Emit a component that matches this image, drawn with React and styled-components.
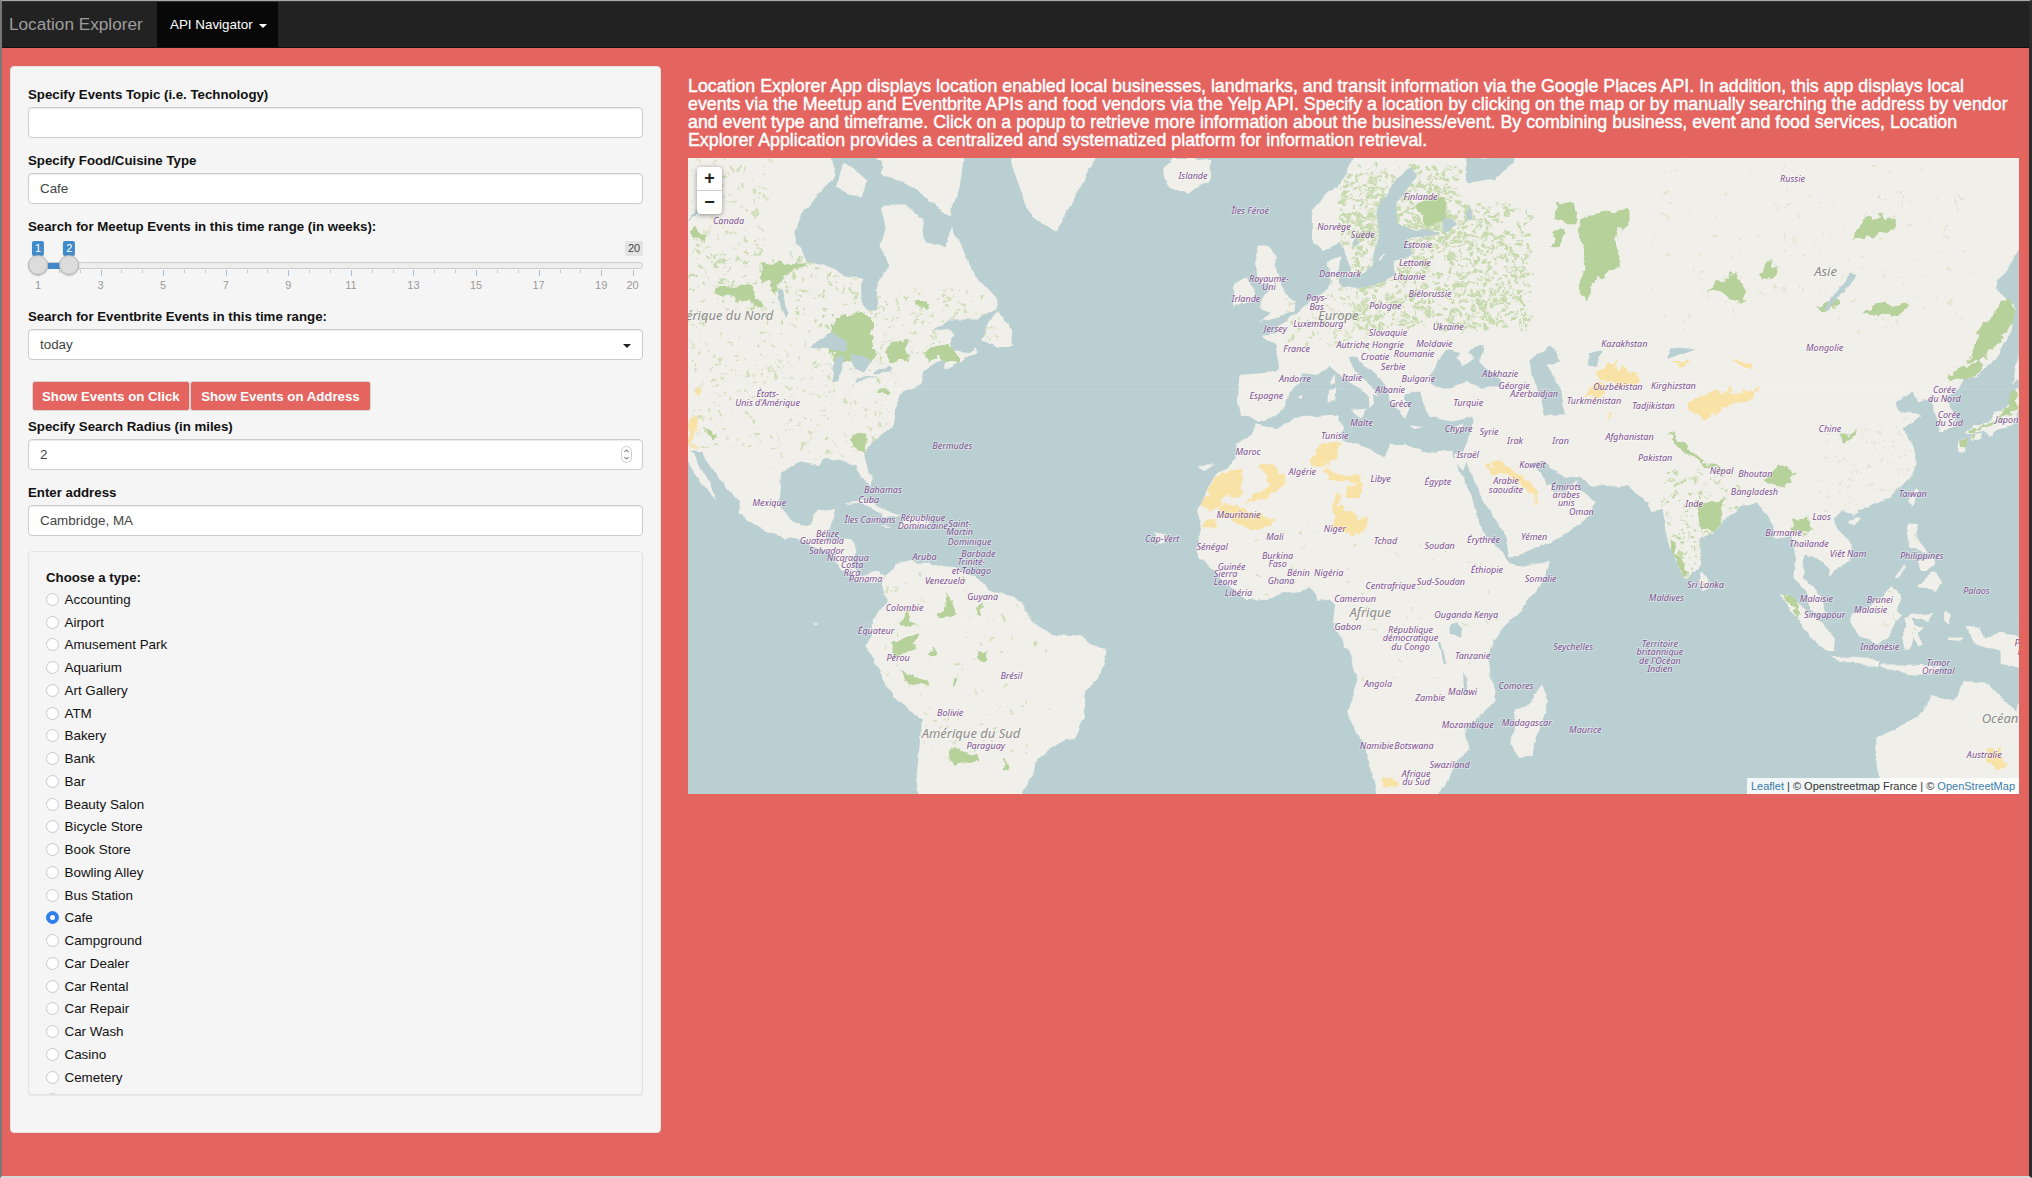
import React from 'react'
import styled, { createGlobalStyle } from 'styled-components'

const GlobalStyle = createGlobalStyle`
  html, body {
    margin: 0;
    padding: 0;
    background: #8a8a8a;
  }
  * { box-sizing: border-box; }
`

const MAP_X = 688
const MAP_Y = 158
const MAP_W = 1331
const MAP_H = 636

// web mercator at zoom 3, tile edge 233px
const project = ([lon, lat]) => {
  const merc = Math.log(Math.tan(Math.PI / 4 + (lat * Math.PI) / 360))
  return [1286 + 5.178 * lon - MAP_X, 622 - 296.7 * merc - MAP_Y]
}
const toPoints = (list) => list.map(project).map((p) => p.map((n) => n.toFixed(1)).join(',')).join(' ')

// the reference crops were read at 2.306x wide, 3x high
const fromCrop = (ox, oy) => ([zx, zy]) => [ox + zx / 2.306 - MAP_X, oy + zy / 3 - MAP_Y]
const cropA = fromCrop(680, 60)
const cropB = fromCrop(1352, 60)
const cropC = fromCrop(680, 360)
const cropD = fromCrop(1352, 360)
const shape = (crop, list) => list.map(crop).map((p) => p.map((n) => n.toFixed(1)).join(',')).join(' ')

const LAND = [
  [[-118,69],[-96,69],[-94,67],[-88,66.5],[-87,65],[-90,63.5],[-93,62],[-94.5,60],[-94.5,58.7],[-92.5,57],[-88,56.5],[-85,55.3],[-82.3,55.1],[-82.2,53],[-80.5,51.4],[-79,51.5],[-79,54],[-76.8,56.5],[-78.5,58.7],[-77.5,60.5],[-78,62.4],[-73.5,62.4],[-70,61],[-69.5,59],[-66,58.5],[-64.5,60.3],[-62,57.5],[-60,55.5],[-56,53],[-55.8,51.7],[-60,50.2],[-65,50.2],[-68,48.8],[-65,49.2],[-64.3,48.5],[-65,47.5],[-64,46.2],[-61,46],[-60,46.8],[-60,46],[-63.5,44.6],[-66,43.6],[-66,45],[-67,44.8],[-70,43.7],[-70.5,41.7],[-74,40.6],[-75.5,38],[-76,35.2],[-78,33.9],[-81,32],[-81.5,30.5],[-80,26.8],[-80.5,25.2],[-82,26.5],[-83,29],[-85,29.7],[-89,30.2],[-90,29],[-94,29.6],[-97.3,27.5],[-97.8,22.5],[-95.5,19],[-94,18.2],[-91.5,18.6],[-90.5,21],[-87,21.5],[-88,18],[-88.8,15.9],[-84,15.8],[-83.3,14.9],[-83.7,11],[-82,9],[-79.5,9.6],[-77.4,8.7],[-78,7.5],[-80,7.4],[-83,8.2],[-85.7,10],[-87.5,13],[-92,14.5],[-94.5,16.2],[-97,15.9],[-102,18],[-105.5,20.5],[-105.5,22.5],[-109,26],[-113,31.2],[-114.8,31.5],[-112,27],[-110,23],[-112,25],[-115,29],[-117,32.5],[-121,34.5],[-124,40],[-125,49],[-130,54],[-140,60],[-160,60],[-165,70]],
  [[-77.4,8.7],[-75.5,11],[-72,12],[-71,11],[-68,11],[-64,10.5],[-60,8.5],[-57,6],[-52,4.8],[-50,1.5],[-48,-0.7],[-44.3,-2.5],[-40,-2.8],[-35.2,-5.5],[-34.8,-8],[-37,-11],[-39,-13.5],[-39,-18],[-41,-22],[-44,-23],[-48,-25.5],[-48.6,-28],[-52,-32.5],[-56,-35],[-70,-35],[-71.5,-30],[-70.3,-18.5],[-76,-14],[-79,-8],[-81.2,-5],[-80,-2.5],[-80,0.5],[-78,2.5],[-77.3,4],[-78,7]],
  [[-78,65],[-74,64.5],[-65,61.5],[-63,64],[-62,67],[-70,72],[-85,72],[-85,68],[-78,66]],
  [[-87,64],[-82,63],[-81,64.5],[-85,66]],
  [[-59,47.7],[-55.5,46.8],[-53,46.8],[-53,48.7],[-55.5,51.5],[-57.5,50]],
  [[-85,22],[-82,23.1],[-77,21],[-74.2,20.2],[-77.5,19.9],[-78,20.7],[-82,22.3]],
  [[-74.5,18.5],[-73,20],[-70,19.8],[-68.4,18.6],[-71,18],[-74.5,18]],
  [[-78.3,18.4],[-76.3,18.2],[-76.8,17.8]],
  [[-67.2,18.5],[-65.7,18.4],[-66.5,17.9]],
  [[-91.5,-0.4],[-90.6,-0.2],[-91,-1]],
  [[-44,60],[-42,62],[-38,65.5],[-30,69],[-20,72],[-60,76],[-54,70],[-53,66],[-50,62],[-48,61]],
  [[-24,65.5],[-22.5,64],[-19,63.4],[-14.5,64.5],[-14.5,66],[-17,66.3],[-22,66.4]],
  [[-5.5,50],[1.4,51.2],[1.7,52.7],[0,53.5],[-2,56],[-2,57.7],[-3.5,58.6],[-5,58.6],[-6.3,56.6],[-4.8,54.8],[-3,54],[-4.5,53.2],[-5,51.7],[-3,51.3]],
  [[-10,52],[-6.3,52.2],[-6,54],[-7.3,55.3],[-10,54.3]],
  [[12.5,38],[15.6,38.2],[15,36.7]],
  [[8.2,39],[8.3,41],[9.7,41],[9.6,39.2]],
  [[8.6,41.7],[9.4,43],[9.5,41.5]],
  [[23.6,35.5],[26.3,35.2],[24.8,34.9]],
  [[32.3,35],[34.5,35.6],[33.8,34.6],[32.8,34.6]],
  [[2.4,39.6],[3.4,39.9],[3.2,39.3]],
  [[18.2,57],[19,57.9],[18.8,57]],
  [[11,55.7],[12.6,56],[12.2,55]],
  [[-17,28.5],[-13.5,29],[-15.5,27.8]],
  [[-25.3,17],[-22.7,16.7],[-23.6,14.9],[-24.8,15]],
  [[-9,43],[-9.3,38.7],[-8.8,37],[-6.3,36.6],[-5.4,36],[-2,36.8],[0,38.7],[0.5,40.5],[3.2,42],[3.2,43.2],[6,43],[8.5,44.3],[10.5,43],[12.5,41.5],[15.8,40],[16,38],[17,39],[16.8,40.4],[18.4,40],[16,41.7],[13.5,43.5],[12.3,45.3],[13.7,45.6],[15,44.5],[18,42.6],[19.4,41],[20,39.5],[22,37.2],[23,36.5],[23.8,38],[23,40],[26,40.5],[26.2,39.5],[27,38],[27.5,36.8],[30.5,36.3],[33,36],[36,36.7],[35.9,35],[35,33],[34.3,31.3],[32.6,30.5],[32.8,29.5],[34.2,27.8],[34.9,29.5],[36.5,26],[39,21.5],[42.5,16.5],[43.3,12.8],[45,12.8],[48,14],[52,15.7],[55,17],[58.5,20.4],[59.8,22.5],[58.5,23.7],[56.4,24.9],[56.3,26.2],[54,24.2],[51.6,24.3],[51.3,26],[50.3,25.5],[50,26.5],[48,29.5],[50,30.1],[51.5,27.9],[54,26.6],[56.8,27],[59,25.4],[61.6,25.2],[66.5,25.4],[67.5,24],[70,22.5],[70.5,20.8],[72.3,21],[72.8,19],[73.5,15.5],[75,12.5],[76.5,9],[77.5,8.1],[78.2,9],[79.8,10.3],[80.3,13.5],[80,15.5],[82.3,16.7],[85,19.5],[87,21.4],[89,21.9],[91,22.4],[92.2,21],[94.3,18],[94.4,16],[95.5,15.8],[97.6,16.5],[98.5,12],[98.2,8.5],[100.2,6.5],[101,3],[103.5,1.3],[104.2,1.5],[103.4,4.5],[102,6.5],[100,8.5],[100,13.2],[101,12.7],[102.8,12],[105,10],[104.8,8.6],[106.7,10.4],[109.2,11.7],[109,15],[106,18.5],[105.8,19.5],[107.5,21.3],[110,20.3],[110.5,21.2],[114,22.3],[117,23.4],[120,26.5],[121.9,29.5],[121,31.7],[119.3,35],[122.5,37],[119,37.5],[117.7,39],[121,40.8],[122,39],[125,39.7],[125,37.5],[126.5,34.5],[129.3,35.2],[129.4,37],[127.5,39.5],[129.7,41],[130.7,42.3],[133,42.8],[136,44.5],[140,48.5],[141,52],[137,54],[143,59.5],[160,60],[180,65],[180,75],[100,78],[70,73],[68,68.5],[60,69],[44,68],[44,66],[40,64.7],[35,64.3],[34.8,66.5],[40,66.3],[41,67],[38,68.5],[33,69.5],[25,71],[15,68.5],[12,65],[5,62],[5,59],[7,58],[10.5,59],[11.3,58],[12.8,55.5],[14.3,55.5],[16.5,56.5],[18,59.5],[17.5,62],[21,64.5],[24,65.7],[25.3,65],[21.3,62.5],[21.5,60.7],[25,60.2],[30,60],[28,59.5],[23.5,59.2],[24.3,57.5],[21,57],[21,55.3],[18.5,54.7],[14,54],[11,54],[10,54.7],[10.5,57.5],[8.3,57],[8.5,54],[4.5,52.5],[1.5,50.8],[-1.5,49.6],[-1.5,48.6],[-4.7,48.4],[-2,47],[-1.3,44],[-2,43.4]],
  [[-5.9,35.8],[-2,35],[3,36.9],[10,37.3],[11,35],[10.2,34],[11,33],[15.5,32],[19,30.4],[20.2,32.5],[23,32.5],[25,31.6],[29,31],[32,31.2],[32.6,30],[33.7,27.5],[35.5,24],[37,21],[37.3,18.5],[39.5,15.5],[43,12],[43.3,11.5],[45,10.5],[51.2,11.9],[49,7],[46,3],[42,-1],[40,-3.5],[39,-6.5],[39.5,-10],[40.7,-15],[37,-18],[34.8,-20],[35.5,-24],[32.8,-26],[31,-30],[28,-33],[20,-35],[18.3,-34],[17,-29],[14.5,-22.5],[11.8,-17],[13.8,-11],[12.3,-6],[9,-1],[9.5,3.5],[8.5,4.5],[6,4.3],[4.5,6.3],[1,6],[-2,4.8],[-7.5,4.4],[-11,6.7],[-13.5,9.5],[-16.7,12.4],[-17.4,14.7],[-16.3,19],[-17,21],[-14.5,26],[-13,27.8],[-9.8,30],[-9.5,32.5],[-6.8,34]],
  [[49.3,-12],[50.4,-15.5],[47.5,-24.7],[45,-25.5],[43.5,-23],[44.4,-19.5],[44,-17],[47,-15.5]],
  [[114,-22],[114,-26],[115,-34],[118,-35],[124,-33],[130,-31.5],[138,-35],[150,-37],[153.5,-28],[146,-19],[142.5,-11],[141,-17],[136,-12],[131,-11.3],[129,-15],[125,-14],[122,-18],[118,-20]],
  [[95.3,5.5],[97.5,5.2],[100.5,2.2],[103.5,0],[106,-3],[105.8,-5.8],[104.5,-5.8],[101,-2.5],[98.5,1]],
  [[105.2,-6.8],[108.5,-6.6],[112.5,-6.9],[114.5,-7.8],[114.4,-8.7],[110,-8],[106.5,-7.4]],
  [[115,-8.2],[119,-8.2],[123,-8.3],[125,-8.5],[127,-8.5],[124,-10.2],[120,-10],[117,-9],[115,-8.8]],
  [[109,1.5],[111,1.8],[113,3.2],[115.5,5.5],[117,7],[119,5],[117.7,3],[119,1],[117.5,0],[116,-3.5],[114.5,-4],[110.5,-3],[109,0]],
  [[119.5,0.5],[121,1.3],[125,1.5],[124,0.4],[120.8,0.4],[121.5,-1],[123.3,-1],[122,-2],[123,-4.5],[122,-5],[121,-3],[120.4,-5.5],[119.5,-5.5],[119,-3],[119.8,-1]],
  [[120.5,18.5],[122.2,18.4],[122,16],[124,13],[122,13.8],[120.5,14],[120,16]],
  [[122,7],[123.5,8.6],[125.5,9.7],[126.5,7.5],[125.5,5.8],[124,6.5]],
  [[122,11.5],[125,12.3],[125.7,11],[124,9.8],[122.5,9.8]],
  [[117.2,8.4],[119.5,11.3],[119.6,10.3],[118,8.4]],
  [[120.2,23],[121.5,25.2],[122,24.8],[120.9,22]],
  [[108.7,19.2],[110.5,20.1],[111,19.6],[109.6,18.2]],
  [[130,33],[131.7,33.5],[131.3,31.3],[130.3,31.3]],
  [[131,34.3],[133,35.5],[136,36],[137,37.3],[139.5,38.5],[140,40.5],[141.3,41.3],[142,39.5],[141,37],[140.8,35.6],[137,34.6],[135.7,33.5],[135,34.6],[132.5,34.2]],
  [[140,41.7],[141.5,45.4],[145.3,43.5],[143,42],[141,42.5]],
  [[132.5,34],[134.5,34.3],[134,33],[132.5,33]],
  [[131,-1],[134,-0.8],[135,-3.3],[138,-1.6],[141,-2.6],[147,-6],[150,-10.5],[143,-9],[138,-8.3],[138,-5.5],[133,-4],[132.5,-2.8]],
  [[127.5,2],[128.6,1.5],[128.2,-0.8],[127.5,0]],
  [[128,-3],[130.8,-3],[130,-3.6],[128,-3.5]],
  [[79.8,8.5],[80.1,9.8],[81.4,8.5],[81.8,7],[80.6,5.9],[80,6.5]],
]

const LAKES = [
  [[28,41.5],[29,41.2],[31.5,41.2],[35,42],[38,41],[41.5,41.5],[41,43],[37.5,44.7],[38,47],[35,46],[36.5,45.2],[34,44.4],[32.7,45.4],[33.5,46],[31,46.5],[29.5,45.2],[27.8,43.3]],
  [[47,45],[51,47],[53,45],[50.5,44.5],[53,41],[54,37],[50,37],[49,40],[47.5,43]],
  [[58.5,46],[61,46.5],[60,44],[58.3,44]],
  [[73.5,45.2],[79,46.5],[74.5,46.8]],
  [[103.8,51.5],[105,51.6],[110,55.5],[109,55.7]],
  [[30.5,60],[33,60.5],[32,61.2],[30,61.2]],
  [[34.8,61],[36,61.2],[35.5,62.5]],
  [[12.5,58.6],[14,59],[13.5,59.4]],
  [[-92,46.7],[-88,48.8],[-85,47.8],[-84.6,46.5],[-87,46.5]],
  [[-87.8,42],[-86.5,42],[-85,45.8],[-87,45.5]],
  [[-84,46],[-80,45],[-81.7,43.2],[-83.5,43.8]],
  [[-83.2,41.7],[-79,42.8],[-79,43],[-83,42.2]],
  [[-79.6,43.3],[-76.3,43.5],[-76.5,44.1],[-79,43.9]],
  [[-98,53.8],[-97,50.5],[-96.3,51],[-97,54]],
  [[-116,61],[-109,62.8],[-112,62.8]],
  [[33,0],[34,-1],[33.8,-2.8],[31.8,-2.5],[31.8,-0.5]],
  [[29.5,-4],[30,-4],[31,-8.5],[30.5,-8.5]],
  [[34.2,-9.6],[34.9,-11],[35,-14],[34.4,-13.6]],
]

const FORESTS = [
  [cropA, [[350,765],[445,765],[445,900],[350,900]]],
  [cropA, [[480,850],[520,830],[530,900],[480,900]]],
  [cropA, [[560,870],[620,850],[650,900],[570,900]]],
  [cropA, [[85,680],[170,680],[170,695],[200,740],[130,720],[85,695]]],
  [cropA, [[30,500],[60,520],[50,540],[30,530]]],
  [cropA, [[190,610],[295,600],[240,660],[220,700],[190,650]]],
  [cropA, [[540,720],[565,720],[565,740],[540,740]]],
  [cropB, [[470,510],[490,510],[480,570],[455,560]]],
  [cropB, [[470,430],[495,430],[520,450],[520,490],[470,480]]],
  [cropB, [[530,470],[640,440],[640,480],[600,540],[620,620],[560,660],[540,720],[525,700],[535,610],[525,520]]],
  [cropB, [[1155,540],[1170,490],[1220,460],[1250,480],[1245,510],[1200,530]]],
  [cropB, [[940,650],[965,590],[980,625],[960,660]]],
  [cropB, [[820,690],[880,640],[915,690],[905,730],[860,700]]],
  [cropB, [[1065,750],[1115,710],[1120,735],[1090,755]]],
  [cropB, [[1170,760],[1210,730],[1290,740],[1260,770]]],
  [cropB, [[1420,900],[1450,800],[1530,680],[1535,760],[1460,900]]],
  [cropB, [[150,430],[220,410],[220,480],[170,500]]],
  [cropC, [[597,770],[620,700],[640,770],[605,778]]],
  [cropC, [[505,790],[525,755],[548,800],[515,800]]],
  [cropC, [[688,735],[698,730],[698,765],[688,765]]],
  [cropC, [[570,885],[585,865],[590,885]]],
  [cropC, [[685,875],[710,870],[705,895],[685,895]]],
  [cropC, [[490,850],[550,825],[540,860],[510,880],[490,890]]],
  [cropC, [[510,930],[570,960],[575,985],[520,970]]],
  [cropC, [[628,960],[645,955],[635,975]]],
  [cropC, [[620,1165],[640,1165],[690,1180],[690,1205],[630,1210]]],
  [cropC, [[750,1190],[760,1230],[745,1230]]],
  [cropC, [[460,85],[480,85],[480,105],[460,105]]],
  [cropC, [[60,200],[90,225],[70,235]]],
  [cropC, [[395,225],[430,220],[425,285],[400,260]]],
  [cropD, [[790,430],[860,420],[850,500],[810,515]]],
  [cropD, [[730,215],[760,240],[810,300],[880,345],[830,325],[750,260]]],
  [cropD, [[950,360],[990,310],[1025,340],[990,390]]],
  [cropD, [[1015,480],[1055,475],[1060,520],[1020,520]]],
  [cropD, [[1120,225],[1170,215],[1140,245]]],
  [cropD, [[990,700],[1020,710],[1035,770],[1010,740]]],
  [cropD, [[735,530],[775,640],[765,655],[730,560]]],
  [cropD, [[1370,40],[1450,0],[1440,50],[1370,60]]],
  [cropD, [[1400,235],[1500,170],[1530,60],[1535,150],[1440,220],[1410,270]]],
]

const DESERTS = [
  [cropC, [[1295,325],[1295,400],[1250,420],[1245,450],[1200,448],[1215,400],[1245,340]]],
  [cropC, [[1330,325],[1370,315],[1395,350],[1390,385],[1350,415],[1305,430],[1330,395],[1365,370],[1350,340]]],
  [cropC, [[1250,440],[1290,432],[1320,460],[1372,480],[1340,515],[1280,490],[1245,470]]],
  [cropC, [[1215,480],[1238,478],[1235,505],[1212,505]]],
  [cropC, [[1480,240],[1518,240],[1515,290],[1490,325],[1450,318]]],
  [cropC, [[1480,330],[1568,345],[1568,370],[1500,362]]],
  [cropC, [[1510,395],[1530,400],[1520,435],[1530,440],[1568,470],[1568,530],[1530,520],[1505,500]]],
  [cropC, [[1540,380],[1568,370],[1568,415],[1540,410]]],
  [cropC, [[35,80],[50,80],[48,110],[35,110]]],
  [cropC, [[20,165],[45,170],[30,250],[20,260]]],
  [cropC, [[30,255],[45,270],[35,275]]],
  [cropD, [[310,315],[345,305],[395,345],[430,400],[425,445],[415,400],[380,365],[340,340],[315,335]]],
  [cropD, [[0,350],[25,345],[0,362]]],
  [cropD, [[0,370],[20,370],[10,415],[0,415]]],
  [cropD, [[0,490],[40,470],[25,520],[0,520]]],
  [cropD, [[590,0],[610,0],[605,25],[640,25],[660,60],[650,80],[590,65],[565,50]]],
  [cropD, [[540,100],[565,70],[590,75],[570,110],[535,115]]],
  [cropD, [[780,125],[830,95],[940,90],[910,120],[820,170],[790,160],[775,145]]],
  [cropD, [[740,0],[780,0],[760,22]]],
  [cropD, [[870,0],[925,0],[925,25]]],
  [cropD, [[590,155],[605,155],[598,185]]],
  [cropD, [[1460,1175],[1500,1160],[1510,1210],[1485,1235],[1460,1200]]],
  [cropD, [[65,1260],[85,1245],[110,1275],[70,1285]]],
]

// scattered woodland and town noise: x0, y0, x1, y1 on the page, count, size, colour
const SCATTER = [
  [1352, 205, 1530, 330, 1000, 4, '#c8dbb0'],
  [1340, 165, 1460, 245, 500, 4, '#c8dbb0'],
  [1285, 270, 1370, 350, 150, 3, '#d0dfba'],
  [690, 158, 770, 260, 100, 3, '#d0dfba'],
  [690, 250, 880, 330, 200, 3.5, '#c8dbb0'],
  [850, 290, 1000, 360, 160, 3, '#d0dfba'],
  [780, 340, 900, 460, 160, 2.5, '#cfdeb9'],
  [690, 330, 780, 450, 130, 3, '#cfdeb9'],
  [1660, 470, 1740, 600, 260, 3, '#c2d8a8'],
  [1650, 160, 1970, 330, 260, 2.5, '#dde5cb'],
  [1820, 420, 1920, 520, 170, 2, '#dfdcd5'],
  [1250, 520, 1500, 680, 100, 2.5, '#d4e0bf'],
  [880, 560, 1050, 760, 120, 2.5, '#cfdeb9'],
  [760, 330, 900, 470, 300, 1.5, '#e2dfd8'],
  [1660, 470, 1760, 600, 200, 1.5, '#dfdcd5'],
  [1860, 520, 1930, 640, 90, 2.5, '#cfdeb9'],
]

const scatterBlobs = () => {
  let seed = 48271
  const next = () => {
    seed = (seed * 16807) % 2147483647
    return seed / 2147483647
  }
  const blobs = []
  SCATTER.forEach(([x0, y0, x1, y1, count, size, color]) => {
    for (let i = 0; i < count; i++) {
      const x = x0 + next() * (x1 - x0) - MAP_X
      const y = y0 + next() * (y1 - y0) - MAP_Y
      const r = size * (0.4 + next() * 0.6)
      const pts = [0, 1, 2, 3, 4].map((k) => {
        const a = (k / 5) * Math.PI * 2 + next()
        const d = r * (0.5 + next() * 0.5)
        return `${(x + Math.cos(a) * d).toFixed(1)},${(y + Math.sin(a) * d * 0.8).toFixed(1)}`
      })
      blobs.push({ id: blobs.length, points: pts.join(' '), color })
    }
  })
  return blobs
}

const LABELS = [
  [cropA, [['Islande',1183,348],['Îles Féroé',1315,453],['Canada',112,482],['Norvège',1508,502],['Royaume-',1358,657],['Uni',1358,682],['Irlande',1305,716],['Danemark',1522,642],['Pays-',1468,715],['Bas',1468,740],['Luxembourg',1472,793],['Jersey',1373,808],['France',1422,868],['Autriche',1552,855]]],
  [cropB, [['Suède',25,525],['Finlande',158,410],['Estonie',152,555],['Lettonie',145,610],['Lituanie',132,650],['Biélorussie',180,703],['Pologne',77,738],['Slovaquie',83,820],['Ukraine',222,800],['Hongrie',83,855],['Moldavie',190,853],['Roumanie',143,882],['Croatie',53,890],['Russie',1016,358],['Kazakhstan',628,852],['Mongolie',1090,863]]],
  [cropC, [['États-',202,103],["Unis d'Amérique",202,128],['Bermudes',628,258],['Andorre',1418,57],['Espagne',1352,108],['Italie',1550,53],['Maroc',1310,277],['Tunisie',1510,228],['Algérie',1435,335],['Bahamas',468,390],['Cuba',435,420],['Mexique',206,430],['Îles Caïmans',438,481],['République',560,473],['Dominicaine',560,498],['Saint-',645,491],['Martin',645,517],['Bélize',340,523],['Guatemala',327,543],['Dominique',668,545],['Salvador',338,572],['Nicaragua',387,594],['Costa',397,615],['Rica',397,640],['Panama',428,658],['Aruba',564,591],['Barbade',688,583],['Trinité-',672,607],['et-Tobago',672,632],['Venezuela',611,662],['Guyana',698,711],['Colombie',518,745],['Équateur',452,812],['Pérou',503,895],['Brésil',764,949],['Bolivie',623,1058],['Paraguay',705,1159],['Mauritanie',1288,465],['Mali',1372,531],['Niger',1510,507],['Cap-Vert',1112,537],['Sénégal',1227,562],['Burkina',1378,587],['Faso',1378,612],['Guinée',1272,622],['Sierra',1258,641],['Leone',1258,667],['Bénin',1426,640],['Nigéria',1496,639],['Ghana',1386,662],['Libéria',1288,698],['Gabon',1540,802]]],
  [cropD, [['Cameroun',7,717],['Serbie',95,21],['Bulgarie',153,57],['Abkhazie',342,43],['Géorgie',374,77],['Azerbaïdjan',420,102],['Albanie',88,90],['Grèce',112,131],['Turquie',268,130],['Ouzbékistan',613,81],['Kirghizstan',741,78],['Turkménistan',558,122],['Tadjikistan',695,138],['Corée',1366,91],['du Nord',1366,116],['Corée',1377,165],['du Sud',1377,190],['Japon',1510,180],['Chine',1102,206],['Malte',22,190],['Chypre',246,207],['Syrie',316,215],['Irak',376,242],['Iran',481,244],['Afghanistan',640,231],['Israël',267,284],['Pakistan',699,293],['Koweït',416,314],['Népal',852,333],['Bhoutan',930,343],['Libye',66,357],['Égypte',198,367],['Arabie',355,364],['saoudite',355,389],['Émirats',494,380],['arabes',494,405],['unis',494,430],['Oman',529,455],['Bangladesh',928,395],['Taïwan',1293,403],['Inde',789,431],['Laos',1083,471],['Birmanie',995,518],['Tchad',77,542],['Soudan',202,558],['Érythrée',303,539],['Yémen',420,532],['Thaïlande',1054,553],['Viêt Nam',1144,581],['Philippines',1314,589],['Éthiopie',311,631],['Somalie',435,657],['Sud-Soudan',205,665],['Centrafrique',89,679],['Sri Lanka',815,676],['Palaos',1440,692],['Maldives',725,715],['Malaisie',1071,717],['Brunei',1217,720],['Malaisie',1196,750],['Ouganda',233,764],['Kenya',309,766],['Singapour',1090,766],['République',135,810],['démocratique',135,835],['du Congo',135,860],['Seychelles',510,861],['Indonésie',1217,862],['Territoire',710,851],['britannique',710,876],["de l'Océan",710,902],['Indien',710,927],['Tanzanie',278,889],['Timor',1352,909],['Oriental',1352,934],['Angola',60,973],['Comores',378,979],['Malawi',255,995],['Zambie',180,1015],['Mozambique',267,1094],['Madagascar',403,1088],['Maurice',538,1110],['Australie',1458,1186],['Namibie',57,1159],['Botswana',143,1159],['Swaziland',225,1216],['Afrique',148,1242],['du Sud',148,1267],['Papouasie-',1579,850],['Nouvelle-Guinée',1610,876]]],
]

const REGIONS = [
  [cropA, 'Amérique du Nord', 215, 767, 'end'],
  [cropA, 'Europe', 1518, 767, 'middle'],
  [cropB, 'Asie', 1092, 635, 'middle'],
  [cropC, 'Amérique du Sud', 671, 1122, 'middle'],
  [cropD, 'Afrique', 42, 758, 'middle'],
  [cropD, 'Océanie', 1452, 1078, 'start'],
]

const TYPES = ['Accounting', 'Airport', 'Amusement Park', 'Aquarium', 'Art Gallery', 'ATM', 'Bakery', 'Bank', 'Bar', 'Beauty Salon', 'Bicycle Store', 'Book Store', 'Bowling Alley', 'Bus Station', 'Cafe', 'Campground', 'Car Dealer', 'Car Rental', 'Car Repair', 'Car Wash', 'Casino', 'Cemetery', 'Church']

const sliderX = (v) => 10 + (v - 1) * 31.29
const MAJOR = [1, 3, 5, 7, 9, 11, 13, 15, 17, 19]
const MINOR = MAJOR.slice(0, 9).flatMap((v) => [v + 2 / 3, v + 4 / 3])

const Page = styled.div`
  width: 2032px;
  height: 1178px;
  display: flex;
  flex-direction: column;
  overflow: hidden;
  border-top: 1px solid #a9a9a9;
  border-left: 2px solid #777;
  border-right: 3px solid #2b2b2b;
  border-bottom: 2px solid #d9d9d9;
  font-family: "Liberation Sans", Arial, sans-serif;
  background: #e4655f;
`

const Navbar = styled.nav`
  height: 47px;
  flex: none;
  display: flex;
  background: #222;
  border-top: 1px solid #333;
  border-bottom: 1px solid #111;
`

const Brand = styled.div`
  width: 155px;
  padding-left: 7px;
  line-height: 44px;
  font-size: 17.2px;
  color: #9d9d9d;
`

const NavItem = styled.div`
  width: 121px;
  display: flex;
  align-items: center;
  gap: 6px;
  padding-left: 13px;
  background: #080808;
  color: #fff;
  font-size: 13.4px;
`

const Caret = styled.span`
  width: 0;
  height: 0;
  margin-top: 2px;
  border-top: 4px solid ${(p) => p.$color || '#fff'};
  border-left: 4px solid transparent;
  border-right: 4px solid transparent;
`

const Main = styled.main`
  flex: 1;
  display: flex;
  align-items: flex-start;
`

const Well = styled.aside`
  width: 651px;
  height: 1067px;
  flex: none;
  margin: 18px 0 0 8px;
  padding: 18px 17px 0;
  background: #f5f5f5;
  border: 1px solid #e3e3e3;
  border-radius: 4px;
  color: #111;
`

const Field = styled.div`
  margin-bottom: ${(p) => p.$after ?? 13}px;
`

const Label = styled.label`
  display: block;
  height: 20px;
  margin-bottom: 2px;
  font-size: 13.25px;
  font-weight: 700;
  line-height: 20px;
  color: #111;
`

const Control = styled.div`
  height: 31px;
  display: flex;
  align-items: center;
  justify-content: space-between;
  padding: 0 11px;
  background: #fff;
  border: 1px solid #ccc;
  border-radius: 4px;
  box-shadow: inset 0 1px 1px rgba(0, 0, 0, 0.08);
  font-size: 13.4px;
  color: #444;
`

const Spinner = styled.svg`
  width: 11px;
  height: 17px;
  margin-right: -1px;
`

const Slider = styled.div`
  position: relative;
  height: 57px;
  margin-top: -2px;
  margin-bottom: 13px;
`

const Track = styled.div`
  position: absolute;
  left: 0;
  right: 0;
  top: 25px;
  height: 7px;
  background: #eee;
  border: 1px solid #ccc;
  border-radius: 4px;
`

const TrackBar = styled.div`
  position: absolute;
  left: 20px;
  width: 14px;
  top: 26px;
  height: 6px;
  background: #428bca;
`

const Handle = styled.span`
  position: absolute;
  top: 18px;
  width: 20px;
  height: 20px;
  margin-left: -10px;
  background: #dcdcdc;
  border: 1px solid #b5b5b5;
  border-radius: 50%;
  box-shadow: 0 1px 2px rgba(0, 0, 0, 0.2);
`

const Flag = styled.span`
  position: absolute;
  top: 4px;
  height: 15px;
  padding: 0 3px;
  transform: translateX(-50%);
  background: ${(p) => (p.$max ? '#e3e3e3' : '#428bca')};
  color: ${(p) => (p.$max ? '#444' : '#fff')};
  border-radius: 2px;
  font-size: 11px;
  line-height: 15px;
`

const Tick = styled.span`
  position: absolute;
  top: 33px;
  width: 1px;
  height: ${(p) => (p.$minor ? 3 : 6)}px;
  background: ${(p) => (p.$minor ? '#c9c9c9' : '#a7bfd8')};
`

const TickLabel = styled.span`
  position: absolute;
  top: 41px;
  transform: translateX(-50%);
  font-size: 11px;
  line-height: 14px;
  color: #9a9a9a;
`

const ButtonRow = styled.div`
  display: flex;
  padding-left: 4px;
  margin: 21px 0 6px;
`

const EventButton = styled.button`
  height: 30px;
  padding: 0 ${(p) => p.$pad}px;
  background: #e4655f;
  border: 1px solid #d6d6d6;
  border-radius: 3px;
  color: #fff;
  font-family: inherit;
  font-size: 13.25px;
  font-weight: 700;
  white-space: nowrap;
`

const TypePanel = styled.div`
  height: 544px;
  margin-top: 15px;
  padding: 16px 17px 0;
  overflow: hidden;
  background: #f5f5f5;
  border: 1px solid #e3e3e3;
  border-radius: 4px;
  box-shadow: 0 1px 1px rgba(0, 0, 0, 0.06);
`

const TypeTitle = styled.div`
  height: 20px;
  font-size: 13.25px;
  font-weight: 700;
  line-height: 20px;
`

const TypeRow = styled.div`
  height: 22.76px;
  display: flex;
  align-items: center;
  gap: 5.5px;
  font-size: 13.4px;
  color: #111;
`

const Radio = styled.span`
  width: 13px;
  height: 13px;
  flex: none;
  display: flex;
  align-items: center;
  justify-content: center;
  background: ${(p) => (p.$checked ? '#2f80ed' : '#fff')};
  border: 1px solid ${(p) => (p.$checked ? '#2f80ed' : '#c9c9c9')};
  border-radius: 50%;

  &::after {
    content: "";
    width: 5px;
    height: 5px;
    border-radius: 50%;
    background: ${(p) => (p.$checked ? '#fff' : 'transparent')};
  }
`

const Content = styled.section`
  flex: 1;
  padding: 29px 0 0 27px;
`

const Intro = styled.p`
  margin: 0 0 9px;
  color: #fff;
  font-size: 17.8px;
  font-weight: 400;
  -webkit-text-stroke: 0.45px #fff;
  line-height: 18px;
  white-space: nowrap;
`

const MapFrame = styled.div`
  position: relative;
  width: ${MAP_W}px;
  height: ${MAP_H}px;
  overflow: hidden;
  background: #b9cfd1;
`

const MapSvg = styled.svg`
  display: block;
  width: 100%;
  height: 100%;
`

const CountryLabel = styled.text`
  font-family: "Noto Sans", "Open Sans", sans-serif;
  font-style: italic;
  font-size: 9px;
  fill: #7d4f92;
  text-anchor: middle;
  stroke: rgba(255, 255, 255, 0.45);
  stroke-width: 1.6px;
  paint-order: stroke;
`

const RegionLabel = styled.text`
  font-family: "Noto Sans", "Open Sans", sans-serif;
  font-style: italic;
  font-size: 13px;
  fill: #8a8a8a;
  stroke: rgba(255, 255, 255, 0.4);
  stroke-width: 1.5px;
  paint-order: stroke;
`

const ZoomBar = styled.div`
  position: absolute;
  left: 9px;
  top: 9px;
  width: 25px;
  background: #fff;
  border-radius: 4px;
  box-shadow: 0 1px 5px rgba(0, 0, 0, 0.4);
`

const ZoomButton = styled.div`
  height: 23.5px;
  text-align: center;
  font-family: "Liberation Sans", sans-serif;
  font-size: 18px;
  font-weight: 700;
  line-height: 22px;
  color: #222;
  border-bottom: ${(p) => (p.$last ? 'none' : '1px solid #ccc')};
`

const Attribution = styled.div`
  position: absolute;
  right: 0;
  bottom: 0;
  height: 16px;
  padding: 0 4px;
  background: rgba(255, 255, 255, 0.8);
  font-size: 11px;
  line-height: 17px;
  color: #333;
`

const MapLink = styled.span`
  color: #3a7cab;
`

const WorldMap = () => {
  const blobs = scatterBlobs()
  return (
    <MapSvg viewBox={`0 0 ${MAP_W} ${MAP_H}`}>
      <defs>
        <clipPath id="land">
          {LAND.map((c, i) => <polygon key={i} points={toPoints(c)} />)}
        </clipPath>
        <filter id="coast" x="-2%" y="-2%" width="104%" height="104%">
          <feTurbulence type="fractalNoise" baseFrequency="0.06" numOctaves="3" seed="4" result="noise" />
          <feDisplacementMap in="SourceGraphic" in2="noise" scale="7" xChannelSelector="R" yChannelSelector="G" />
          <feGaussianBlur stdDeviation="0.5" />
        </filter>
        <filter id="patch" x="-2%" y="-2%" width="104%" height="104%">
          <feTurbulence type="fractalNoise" baseFrequency="0.09" numOctaves="3" seed="9" result="noise" />
          <feDisplacementMap in="SourceGraphic" in2="noise" scale="13" xChannelSelector="R" yChannelSelector="G" />
          <feGaussianBlur stdDeviation="0.7" />
        </filter>
      </defs>
      <g filter="url(#coast)">
        {LAND.map((c, i) => <polygon key={i} points={toPoints(c)} fill="#f1efe9" />)}
      </g>
      <g clipPath="url(#land)">
        <g filter="url(#patch)">
          {blobs.map((b) => <polygon key={b.id} points={b.points} fill={b.color} />)}
          {FORESTS.map(([crop, pts], i) => <polygon key={i} points={shape(crop, pts)} fill="#b7d19a" />)}
          {DESERTS.map(([crop, pts], i) => <polygon key={i} points={shape(crop, pts)} fill="#f8e2a6" />)}
        </g>
      </g>
      <g filter="url(#coast)">
        {LAKES.map((c, i) => <polygon key={i} points={toPoints(c)} fill="#b9cfd1" />)}
      </g>
      <line x1="0" x2={MAP_W} y1="231" y2="231" stroke="#fff" strokeOpacity="0.14" />
      <line x1="0" x2={MAP_W} y1="464" y2="464" stroke="#fff" strokeOpacity="0.14" />
      {LABELS.flatMap(([crop, list], g) => list.map(([name, zx, zy], i) => {
        const [x, y] = crop([zx, zy])
        return <CountryLabel key={`${g}-${i}`} x={x} y={y + 3}>{name}</CountryLabel>
      }))}
      {REGIONS.map(([crop, name, zx, zy, anchor]) => {
        const [x, y] = crop([zx, zy])
        return <RegionLabel key={name} x={x} y={y + 4} textAnchor={anchor}>{name}</RegionLabel>
      })}
    </MapSvg>
  )
}

const App = () => (
  <Page>
    <GlobalStyle />
    <Navbar>
      <Brand>Location Explorer</Brand>
      <NavItem>API Navigator <Caret /></NavItem>
    </Navbar>
    <Main>
      <Well>
        <Field>
          <Label>Specify Events Topic (i.e. Technology)</Label>
          <Control />
        </Field>
        <Field>
          <Label>Specify Food/Cuisine Type</Label>
          <Control>Cafe</Control>
        </Field>
        <Label>Search for Meetup Events in this time range (in weeks):</Label>
        <Slider>
          <Track />
          <TrackBar />
          {MINOR.map((v) => <Tick key={v} $minor style={{ left: sliderX(v) }} />)}
          {[...MAJOR, 20].map((v) => <Tick key={v} style={{ left: sliderX(v) }} />)}
          {[...MAJOR, 20].map((v) => <TickLabel key={v} style={{ left: sliderX(v) }}>{v}</TickLabel>)}
          <Flag style={{ left: sliderX(1) }}>1</Flag>
          <Flag style={{ left: sliderX(2) }}>2</Flag>
          <Flag $max style={{ left: 606 }}>20</Flag>
          <Handle style={{ left: sliderX(1) }} />
          <Handle style={{ left: sliderX(2) }} />
        </Slider>
        <Field $after={0}>
          <Label>Search for Eventbrite Events in this time range:</Label>
          <Control>
            today
            <Caret $color="#222" />
          </Control>
        </Field>
        <ButtonRow>
          <EventButton $pad={9}>Show Events on Click</EventButton>
          <EventButton $pad={10.5}>Show Events on Address</EventButton>
        </ButtonRow>
        <Field>
          <Label>Specify Search Radius (in miles)</Label>
          <Control>
            2
            <Spinner viewBox="0 0 11 17">
              <rect x="0.5" y="0.5" width="10" height="16" rx="5" fill="#fff" stroke="#ccc" />
              <path d="M3.5 6 L5.5 3.8 L7.5 6 M3.5 11 L5.5 13.2 L7.5 11" fill="none" stroke="#555" />
            </Spinner>
          </Control>
        </Field>
        <Field $after={0}>
          <Label>Enter address</Label>
          <Control>Cambridge, MA</Control>
        </Field>
        <TypePanel>
          <TypeTitle>Choose a type:</TypeTitle>
          {TYPES.map((t) => (
            <TypeRow key={t}>
              <Radio $checked={t === 'Cafe'} />
              {t}
            </TypeRow>
          ))}
        </TypePanel>
      </Well>
      <Content>
        <Intro>
          Location Explorer App displays location enabled local businesses, landmarks, and transit information via the Google Places API. In addition, this app displays local<br />
          events via the Meetup and Eventbrite APIs and food vendors via the Yelp API. Specify a location by clicking on the map or by manually searching the address by vendor<br />
          and event type and timeframe. Click on a popup to retrieve more information about the business/event. By combining business, event and food services, Location<br />
          Explorer Application provides a centralized and systematized platform for information retrieval.
        </Intro>
        <MapFrame>
          <WorldMap />
          <ZoomBar>
            <ZoomButton>+</ZoomButton>
            <ZoomButton $last>−</ZoomButton>
          </ZoomBar>
          <Attribution>
            <MapLink>Leaflet</MapLink> | © Openstreetmap France | © <MapLink>OpenStreetMap</MapLink>
          </Attribution>
        </MapFrame>
      </Content>
    </Main>
  </Page>
)

export default App
